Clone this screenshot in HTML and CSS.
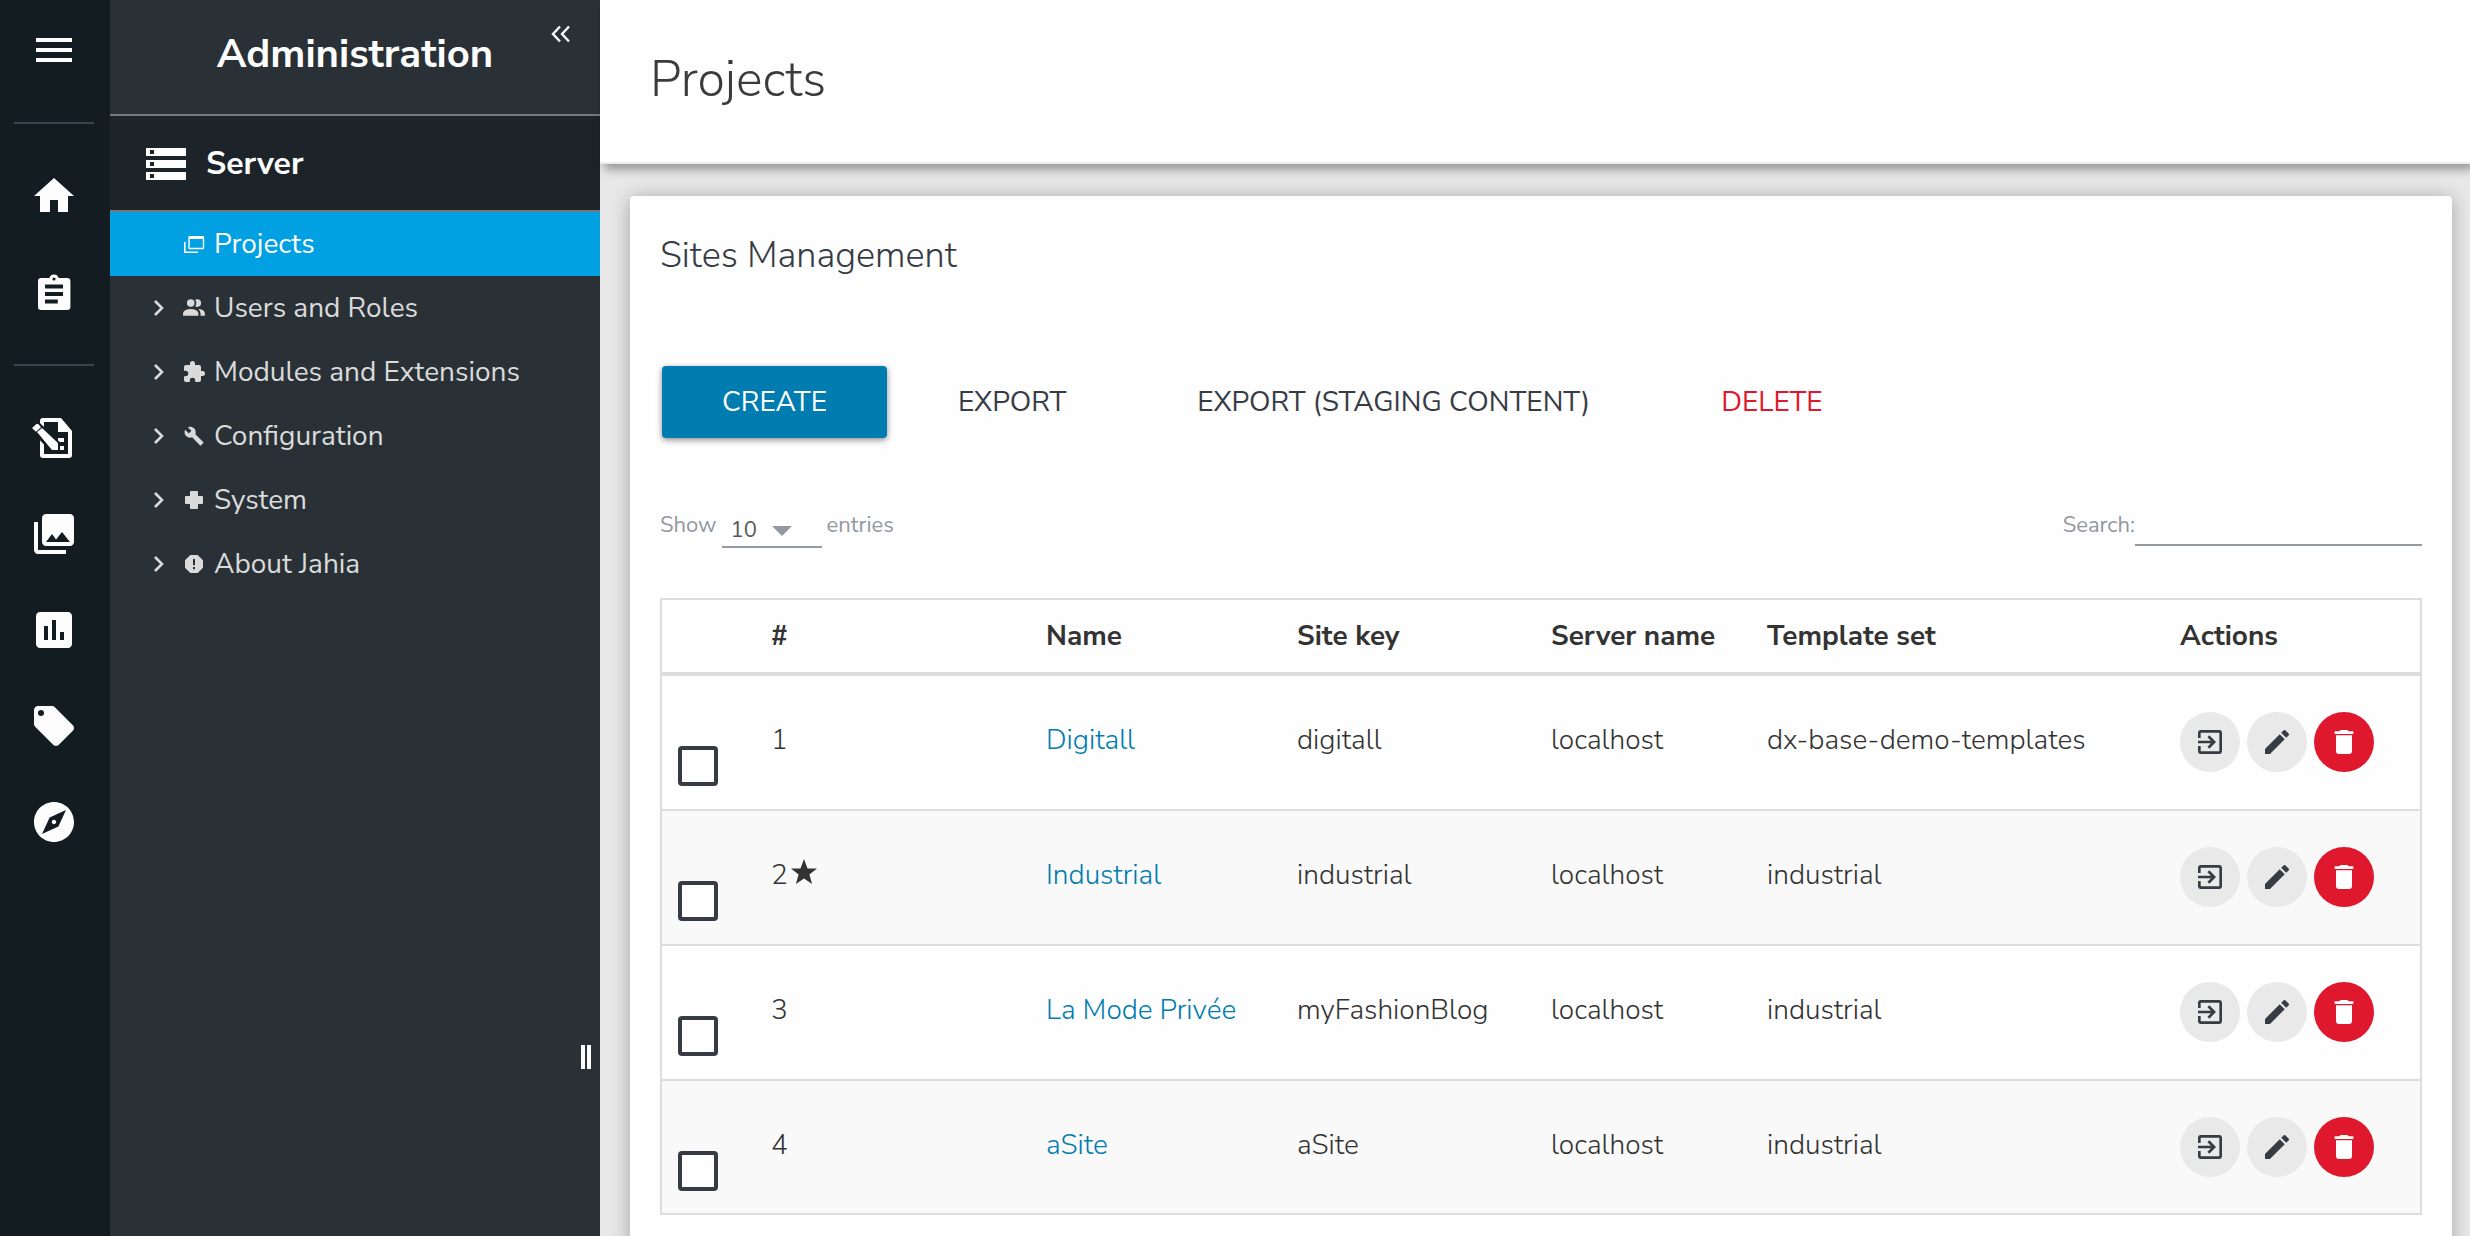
FILE: index.html
```html
<!DOCTYPE html>
<html lang="en">
<head>
<meta charset="utf-8">
<meta name="viewport" content="width=device-width, initial-scale=1">
<title>Administration - Projects</title>
<link rel="stylesheet" href="styles.css">
</head>
<body>
<svg class="sprite" aria-hidden="true">
  <symbol id="i-chevron" viewBox="0 0 12 18"><path d="M2 2l7 7-7 7" fill="none" stroke="currentColor" stroke-width="2.6"/></symbol>
  <symbol id="i-enter" viewBox="0 0 24 24"><path d="M10.09 15.59L11.5 17l5-5-5-5-1.41 1.41L12.67 11H3v2h9.67l-2.58 2.59zM19 3H5c-1.11 0-2 .9-2 2v4h2V5h14v14H5v-4H3v4c0 1.1.89 2 2 2h14c1.1 0 2-.9 2-2V5c0-1.1-.9-2-2-2z"/></symbol>
  <symbol id="i-edit" viewBox="0 0 24 24"><path d="M3 17.25V21h3.75L17.81 9.94l-3.75-3.75L3 17.25zM20.71 7.04c.39-.39.39-1.02 0-1.41l-2.34-2.34c-.39-.39-1.02-.39-1.41 0l-1.83 1.83 3.75 3.75 1.83-1.83z"/></symbol>
  <symbol id="i-delete" viewBox="0 0 24 24"><path d="M6 19c0 1.1.9 2 2 2h8c1.1 0 2-.9 2-2V7H6v12zM19 4h-3.5l-1-1h-5l-1 1H5v2h14V4z"/></symbol>
</svg>
<div class="app">
  <nav class="rail" aria-label="Main">
    <button class="rail-item" type="button" aria-label="Menu"><svg viewBox="0 0 24 24"><path d="M3 18h18v-2H3v2zm0-5h18v-2H3v2zm0-7v2h18V6H3z"/></svg></button>
    <hr class="rail-line">
    <a class="rail-item" href="#" aria-label="Home"><svg viewBox="0 0 24 24"><path d="M10 20v-6h4v6h5v-8h3L12 3 2 12h3v8z"/></svg></a>
    <a class="rail-item" href="#" aria-label="Tasks"><svg viewBox="0 0 24 24"><path fill-rule="evenodd" d="M18.6 5H14.3A2.4 2.4 0 0 0 9.7 5H5.600a1.600 1.600 0 0 0-1.600 1.600v12.800A1.600 1.600 0 0 0 5.600 21h13a1.600 1.600 0 0 0 1.600-1.600V6.600A1.600 1.600 0 0 0 18.600 5zM12 4.700a.8.8 0 1 1 0 1.600a.8.8 0 0 1 0-1.600zM7.500 8.300h9v2h-9zM7.500 12h9v2h-9zM7.500 15.700h6.400v2H7.500z"/></svg></a>
    <hr class="rail-line">
    <a class="rail-item" href="#" aria-label="Page editor"><svg viewBox="0 0 48 48"><path fill-rule="evenodd" d="M13 4h18l11 13v24a3 3 0 0 1-3 3H13a3 3 0 0 1-3-3V7a3 3 0 0 1 3-3zM14 8v32h24V18H28V8z"/><path d="M28 24h6v4h-6zM30 32h4v4h-4z"/><path class="cut" d="M2 14Q2 12 6 10Q7 9 8 10L28 29V36H22L3 16Q2 15 2 14z"/><path d="M7 18l5-4 16 15v7h-6zM2.500 13.500l4-3.500q1-.8 2 .2l2.500 3-5 4.500-3-2.700q-1.200-.8-.5-1.500z"/></svg></a>
    <a class="rail-item" href="#" aria-label="Media"><svg viewBox="0 0 24 24"><path d="M22 16V4c0-1.100-.9-2-2-2H8c-1.100 0-2 .9-2 2v12c0 1.100.9 2 2 2h12c1.100 0 2-.9 2-2zm-11-4l2.030 2.710L16 11l4 5H8l3-4zM2 6v14c0 1.100.9 2 2 2h14v-2H4V6H2z"/></svg></a>
    <a class="rail-item" href="#" aria-label="Reports"><svg viewBox="0 0 24 24"><path d="M19 3H5c-1.100 0-2 .9-2 2v14c0 1.100.9 2 2 2h14c1.100 0 2-.9 2-2V5c0-1.100-.9-2-2-2zM9 17H7v-7h2v7zm4 0h-2V7h2v10zm4 0h-2v-4h2v4z"/></svg></a>
    <a class="rail-item" href="#" aria-label="Tags"><svg viewBox="0 0 24 24"><path d="M5.500 7A1.500 1.500 0 0 1 4 5.500 1.500 1.500 0 0 1 5.500 4 1.500 1.500 0 0 1 7 5.500 1.500 1.500 0 0 1 5.500 7M21.410 11.580l-9-9C12.050 2.220 11.550 2 11 2H4C2.890 2 2 2.890 2 4v7c0 .55.22 1.050.59 1.410l8.990 9c.37.36.87.59 1.420.59s1.050-.23 1.410-.59l7-7c.37-.36.59-.86.59-1.410 0-.56-.23-1.060-.59-1.420z"/></svg></a>
    <a class="rail-item" href="#" aria-label="Explore"><svg viewBox="0 0 24 24"><path d="M12 10.900c-.61 0-1.100.49-1.100 1.100s.49 1.100 1.100 1.100c.61 0 1.100-.49 1.100-1.100s-.49-1.100-1.100-1.100zM12 2C6.480 2 2 6.480 2 12s4.480 10 10 10 10-4.480 10-10S17.520 2 12 2zm2.190 12.190L6 18l3.810-8.190L18 6l-3.810 8.190z"/></svg></a>
  </nav>

  <aside class="side">
    <header class="side-head">
      <h1>Administration</h1>
      <button class="collapse" type="button" aria-label="Collapse"><svg viewBox="0 0 20 18"><path d="M9 1.500L2 9l7 7.500M18 1.500L11 9l7 7.500" fill="none" stroke="currentColor" stroke-width="2.400"/></svg></button>
    </header>
    <h2 class="side-section">
      <svg viewBox="0 0 40 32"><path fill-rule="evenodd" d="M0 0h40v8H0zM4 2v4h4V2zM0 12h40v8H0zM4 14v4h4v-4zM0 24h40v8H0zM4 26v4h4v-4z"/></svg>
      Server
    </h2>
    <ul class="tree">
      <li><a class="tree-item active" href="#"><span class="tree-arrow"></span><svg class="tree-icon" viewBox="0 0 24 24"><path fill-rule="evenodd" d="M7.500 4h13.500a1.200 1.200 0 0 1 1.200 1.200V16a1.200 1.200 0 0 1-1.200 1.200H7.500A1.200 1.200 0 0 1 6.300 16V5.200A1.200 1.200 0 0 1 7.500 4zM7.700 7v8.800h13.100V7zM2 10h1.600v9.500H16V21H2z"/></svg>Projects</a></li>
      <li><a class="tree-item" href="#"><svg class="tree-arrow"><use href="#i-chevron"/></svg><svg class="tree-icon" viewBox="1 1 22 22"><path d="M16 17v2H2v-2s0-4 7-4 7 4 7 4M12.500 7.500A3.500 3.500 0 1 0 9 11a3.500 3.500 0 0 0 3.500-3.500M15.940 13A5.320 5.320 0 0 1 18 17v2h4v-2s0-3.630-6.060-4M15 4a3.390 3.390 0 0 0-1.930.59 5 5 0 0 1 0 5.820A3.390 3.390 0 0 0 15 11a3.500 3.500 0 0 0 0-7z"/></svg>Users and Roles</a></li>
      <li><a class="tree-item" href="#"><svg class="tree-arrow"><use href="#i-chevron"/></svg><svg class="tree-icon" viewBox="0 0 24 24"><path d="M20.500 11H19V7a2 2 0 0 0-2-2h-4V3.500a2.500 2.500 0 0 0-5 0V5H4a2 2 0 0 0-2 2v3.800h1.500a2.700 2.700 0 0 1 0 5.400H2V20a2 2 0 0 0 2 2h3.800v-1.500a2.700 2.700 0 0 1 5.400 0V22H17a2 2 0 0 0 2-2v-4h1.500a2.500 2.500 0 0 0 0-5z"/></svg>Modules and Extensions</a></li>
      <li><a class="tree-item" href="#"><svg class="tree-arrow"><use href="#i-chevron"/></svg><svg class="tree-icon" viewBox="-2 -2 28 28"><path d="M22.700 19l-9.100-9.100c.9-2.300.4-5-1.500-6.900-2-2-5-2.400-7.400-1.300L9 6 6 9 1.600 4.700C.4 7.100.9 10.100 2.900 12.100c1.900 1.900 4.600 2.400 6.900 1.500l9.100 9.100c.4.4 1 .4 1.400 0l2.300-2.300c.5-.4.5-1.100.1-1.400z"/></svg>Configuration</a></li>
      <li><a class="tree-item" href="#"><svg class="tree-arrow"><use href="#i-chevron"/></svg><svg class="tree-icon" viewBox="0 0 24 24"><path d="M9 3h6a1 1 0 0 1 1 1v4h4a1 1 0 0 1 1 1v6a1 1 0 0 1-1 1h-4v4a1 1 0 0 1-1 1H9a1 1 0 0 1-1-1v-4H4a1 1 0 0 1-1-1V9a1 1 0 0 1 1-1h4V4a1 1 0 0 1 1-1z"/></svg>System</a></li>
      <li><a class="tree-item" href="#"><svg class="tree-arrow"><use href="#i-chevron"/></svg><svg class="tree-icon" viewBox="0 0 24 24"><path fill-rule="evenodd" d="M8.300 3h7.400L21 8.300v7.400L15.700 21H8.300L3 15.700V8.300zM11 7v6.200h2V7zM11 15v2.200h2V15z"/></svg>About Jahia</a></li>
    </ul>
    <div class="resize" role="separator" aria-orientation="vertical"></div>
  </aside>

  <main class="main">
    <header class="page-head"><h2>Projects</h2></header>
    <div class="scroll">
      <section class="card">
        <h3>Sites Management</h3>
        <div class="actions">
          <button class="btn primary" type="button">CREATE</button>
          <button class="btn" type="button">EXPORT</button>
          <button class="btn" type="button">EXPORT (STAGING CONTENT)</button>
          <button class="btn danger" type="button">DELETE</button>
        </div>
        <div class="filters">
          <div class="length">
            <label for="length">Show</label>
            <span class="select"><select id="length"><option>10</option><option>25</option><option>50</option></select><svg viewBox="0 0 20 10"><path d="M0 0h20L10 10z"/></svg></span>
            <span>entries</span>
          </div>
          <div class="search"><label for="search">Search:</label><input id="search" type="search"></div>
        </div>
        <table class="sites">
          <colgroup><col class="c-check"><col class="c-num"><col class="c-name"><col class="c-key"><col class="c-server"><col class="c-template"><col class="c-actions"></colgroup>
          <thead>
            <tr><th></th><th>#</th><th>Name</th><th>Site key</th><th>Server name</th><th>Template set</th><th>Actions</th></tr>
          </thead>
          <tbody>
            <tr>
              <td class="check"><input type="checkbox" aria-label="Select Digitall"></td><td>1</td><td><a href="#">Digitall</a></td><td>digitall</td><td>localhost</td><td>dx-base-demo-templates</td>
              <td class="tools"><div><button type="button" aria-label="Open"><svg><use href="#i-enter"/></svg></button><button type="button" aria-label="Edit"><svg><use href="#i-edit"/></svg></button><button class="remove" type="button" aria-label="Delete"><svg><use href="#i-delete"/></svg></button></div></td>
            </tr>
            <tr>
              <td class="check"><input type="checkbox" aria-label="Select Industrial"></td><td>2<svg class="star" viewBox="0 0 26 26"><path d="M13 0l3.500 9.500H26l-7.600 6 2.700 9.500L13 19.500 4.900 25l2.700-9.500L0 9.500h9.500z"/></svg></td><td><a href="#">Industrial</a></td><td>industrial</td><td>localhost</td><td>industrial</td>
              <td class="tools"><div><button type="button" aria-label="Open"><svg><use href="#i-enter"/></svg></button><button type="button" aria-label="Edit"><svg><use href="#i-edit"/></svg></button><button class="remove" type="button" aria-label="Delete"><svg><use href="#i-delete"/></svg></button></div></td>
            </tr>
            <tr>
              <td class="check"><input type="checkbox" aria-label="Select La Mode Privée"></td><td>3</td><td><a href="#">La Mode Privée</a></td><td>myFashionBlog</td><td>localhost</td><td>industrial</td>
              <td class="tools"><div><button type="button" aria-label="Open"><svg><use href="#i-enter"/></svg></button><button type="button" aria-label="Edit"><svg><use href="#i-edit"/></svg></button><button class="remove" type="button" aria-label="Delete"><svg><use href="#i-delete"/></svg></button></div></td>
            </tr>
            <tr>
              <td class="check"><input type="checkbox" aria-label="Select aSite"></td><td>4</td><td><a href="#">aSite</a></td><td>aSite</td><td>localhost</td><td>industrial</td>
              <td class="tools"><div><button type="button" aria-label="Open"><svg><use href="#i-enter"/></svg></button><button type="button" aria-label="Edit"><svg><use href="#i-edit"/></svg></button><button class="remove" type="button" aria-label="Delete"><svg><use href="#i-delete"/></svg></button></div></td>
            </tr>
          </tbody>
        </table>
      </section>
    </div>
  </main>
</div>
</body>
</html>
```
FILE: styles.css
```css
* { box-sizing: border-box; }

body {
  margin: 0;
  font: 400 28px/40px "Nunito Sans", Nunito, Lato, "Open Sans", sans-serif;
  color: #333;
  background: #e8e8e8;
}

h1, h2, h3, ul { margin: 0; padding: 0; }
button, input, select { font: inherit; color: inherit; }
button { border: 0; padding: 0; background: none; cursor: pointer; }
svg { display: block; fill: currentColor; }
.sprite { display: none; }

.app { display: flex; height: 100vh; overflow: hidden; }

/* Icon rail */
.rail {
  flex: 0 0 110px;
  display: flex;
  flex-direction: column;
  gap: 48px;
  padding: 26px 14px 0;
  background: #131c21;
  color: #fdfdfd;
}
.rail-item { width: 48px; height: 48px; margin-left: 16px; color: inherit; }
.rail-item svg { width: 48px; height: 48px; }
.rail-item .cut { fill: #131c21; stroke: #131c21; stroke-width: 4; }
.rail-line { width: 80px; height: 2px; margin: 0; border: 0; background: #3b444b; }

/* Administration tree */
.side {
  position: relative;
  flex: 0 0 490px;
  background: #293136;
  color: #fdfdfd;
}
.side-head { position: relative; padding: 30px 0 36px; border-bottom: 2px solid #75797c; text-align: center; }
.side-head h1 { font-size: 40px; line-height: 48px; font-weight: 700; }
.collapse { position: absolute; top: 25px; right: 29px; }
.collapse svg { width: 20px; height: 18px; }
.side-section {
  display: flex;
  align-items: center;
  gap: 20px;
  height: 96px;
  padding: 2px 0 0 36px;
  border-bottom: 2px solid #75797c;
  background: #1c2429;
  font-size: 32px;
  font-weight: 700;
}
.side-section svg { width: 40px; height: 32px; }
.tree { list-style: none; }
.tree-item {
  display: flex;
  align-items: center;
  height: 64px;
  padding-left: 43px;
  color: #dadada;
  text-decoration: none;
}
.tree-item.active { background: #00a0e3; color: #fdfdfd; }
.tree-arrow { width: 12px; height: 18px; margin-right: 17px; }
.tree-icon { width: 24px; height: 24px; margin-right: 8px; }
.resize {
  position: absolute;
  right: 9px;
  top: calc(100vh - 191px);
  width: 10px;
  height: 24px;
  border: solid #fdfdfd;
  border-width: 0 4px;
  cursor: col-resize;
}

/* Content */
.main { flex: 1; min-width: 0; display: flex; flex-direction: column; }
.page-head {
  z-index: 1;
  padding: 50px 50px 52px;
  border-bottom: 2px solid #ededed;
  background: #fefefe;
  box-shadow: 4px 5px 10px rgba(0, 0, 0, .38);
}
.page-head h2 { font-size: 50px; line-height: 60px; font-weight: 300; color: #3b3b3b; }
.scroll { flex: 1; min-height: 0; overflow-y: auto; scrollbar-width: none; padding: 32px 18px 32px 30px; }
.card {
  padding: 36px 30px 60px;
  border-radius: 4px;
  background: #fefefe;
  box-shadow: 0 2px 20px rgba(0, 0, 0, .3);
}
.card h3 { font-size: 36px; line-height: 48px; font-weight: 300; color: #373c44; }

.actions { display: flex; gap: 11px; margin-top: 86px; padding-left: 2px; }
.btn { height: 72px; padding: 0 60px; border-radius: 4px; color: #373c44; white-space: nowrap; }
.btn.primary { background: #007cb0; color: #fdfdfd; box-shadow: 0 2px 6px rgba(0, 0, 0, .45); }
.btn.danger { color: #e0182d; }

.filters {
  display: flex;
  justify-content: space-between;
  margin-top: 70px;
  font-size: 22px;
  line-height: 34px;
  color: #9398a1;
}
.length, .search { display: flex; }
.length { gap: 5px; }
.select { position: relative; width: 100px; }
.select select {
  width: 100%;
  height: 40px;
  padding: 5px 9px 0;
  border: 0;
  border-bottom: 2px solid #9398a1;
  border-radius: 0;
  background: none;
  color: #555;
  appearance: none;
}
.select svg { position: absolute; left: 50px; top: 18px; width: 20px; height: 10px; pointer-events: none; }
.search input {
  width: 287px;
  height: 38px;
  border: 0;
  border-bottom: 2px solid #9398a1;
  border-radius: 0;
  padding: 0;
  background: none;
  color: #555;
}

/* Sites table */
.sites {
  width: 100%;
  margin-top: 50px;
  table-layout: fixed;
  border: 2px solid #ddd;
  border-collapse: separate;
  border-spacing: 0;
}
.c-check { width: 93px; }
.c-num { width: 275px; }
.c-name { width: 251px; }
.c-key { width: 254px; }
.c-server { width: 216px; }
.c-template { width: 413px; }
.c-actions { width: 256px; }
.sites th { height: 76px; padding: 0 16px; border-bottom: 4px solid #ddd; text-align: left; font-weight: 700; }
.sites td { height: 135px; padding: 44px 16px 0; border-bottom: 2px solid #ddd; vertical-align: top; font-weight: 300; white-space: nowrap; }
.sites tr:last-child td { height: 132px; border-bottom: 0; }
.sites thead tr:last-child th { border-bottom: 4px solid #ddd; }
.sites tbody tr:nth-child(even) { background: #f9f9f9; }
.sites a { color: #007cb0; text-decoration: none; }
.sites .check { padding-top: 70px; }
.check input {
  display: block;
  width: 40px;
  height: 40px;
  margin: 0;
  border: 4px solid #373c44;
  border-radius: 4px;
  background: #fefefe;
  appearance: none;
}
.star { display: inline-block; width: 26px; height: 26px; margin-left: 3px; vertical-align: -1px; }
.sites .tools { padding-top: 36px; }
.tools div { display: flex; gap: 7px; }
.tools button {
  display: grid;
  place-items: center;
  width: 60px;
  height: 60px;
  border-radius: 50%;
  background: #e9e9e9;
  color: #373c44;
}
.tools button.remove { background: #e0182d; color: #fff; }
.tools svg { width: 32px; height: 32px; }
```
